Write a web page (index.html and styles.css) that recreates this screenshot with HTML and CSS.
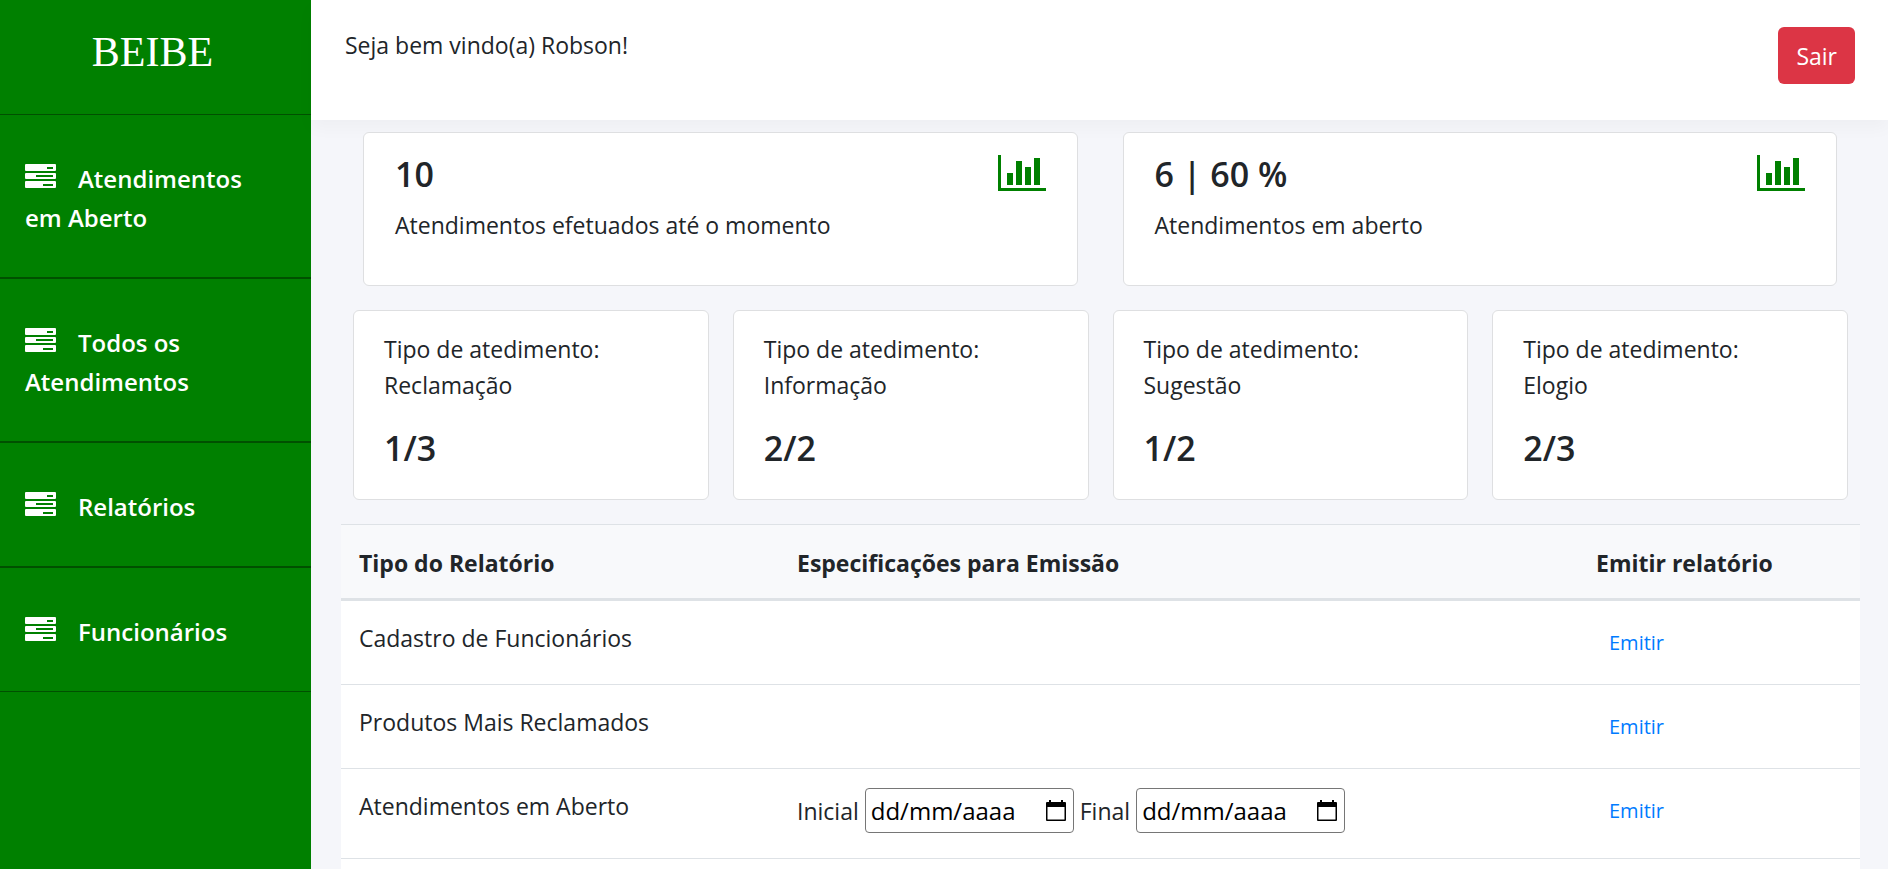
FILE: index.html
```html
<!DOCTYPE html>
<html lang="pt-BR">
<head>
<meta charset="utf-8">
<meta name="viewport" content="width=device-width, initial-scale=1">
<title>BEIBE</title>
<link rel="stylesheet" href="styles.css">
</head>
<body>
<svg class="sprite" aria-hidden="true">
  <symbol id="server" viewBox="0 0 31 24">
    <path fill-rule="evenodd" d="M1 0h29q1 0 1 1v5q0 1-1 1H1q-1 0-1-1V1q0-1 1-1zM22 3v2h6V3zM1 9h29q1 0 1 1v4q0 1-1 1H1q-1 0-1-1v-4q0-1 1-1zM11 11v2h17v-2zM1 17h29q1 0 1 1v5q0 1-1 1H1q-1 0-1-1v-5q0-1 1-1zM18 20v2h10v-2z"/>
  </symbol>
  <symbol id="chart" viewBox="0 0 48 36">
    <path d="M0 0h3v33h45v3H0zM9 18h6v12H9zM18 6h6v24h-6zM27 12h6v18h-6zM36 3h6v27h-6z"/>
  </symbol>
  <symbol id="calendar" viewBox="0 0 20 21">
    <path fill-rule="evenodd" d="M3 0h2v2h10V0h2v2h2q1 0 1 1v17q0 1-1 1H1q-1 0-1-1V3q0-1 1-1h2zM1.500 7v12.500h17V7z"/>
  </symbol>
</svg>
<div class="app">
  <aside class="sidebar">
    <div class="brand">BEIBE</div>
    <nav class="menu">
      <a class="menu-item" href="#abertos"><svg class="menu-icon"><use href="#server"/></svg>Atendimentos em Aberto</a>
      <a class="menu-item" href="#todos"><svg class="menu-icon"><use href="#server"/></svg>Todos os Atendimentos</a>
      <a class="menu-item" href="#relatorios"><svg class="menu-icon"><use href="#server"/></svg>Relatórios</a>
      <a class="menu-item" href="#funcionarios"><svg class="menu-icon"><use href="#server"/></svg>Funcionários</a>
    </nav>
  </aside>
  <div class="page">
    <header class="topbar">
      <span>Seja bem vindo(a) Robson!</span>
      <button class="logout" type="button">Sair</button>
    </header>
    <main class="content">
      <section class="totals">
        <article class="card total">
          <div><h2 class="figure">10</h2><p class="caption">Atendimentos efetuados até o momento</p></div>
          <svg class="chart-icon"><use href="#chart"/></svg>
        </article>
        <article class="card total">
          <div><h2 class="figure">6 | 60 %</h2><p class="caption">Atendimentos em aberto</p></div>
          <svg class="chart-icon"><use href="#chart"/></svg>
        </article>
      </section>
      <section class="types">
        <article class="card type"><p class="caption">Tipo de atedimento:<br>Reclamação</p><h2 class="figure">1/3</h2></article>
        <article class="card type"><p class="caption">Tipo de atedimento:<br>Informação</p><h2 class="figure">2/2</h2></article>
        <article class="card type"><p class="caption">Tipo de atedimento:<br>Sugestão</p><h2 class="figure">1/2</h2></article>
        <article class="card type"><p class="caption">Tipo de atedimento:<br>Elogio</p><h2 class="figure">2/3</h2></article>
      </section>
      <table class="reports">
        <colgroup><col class="col-type"><col class="col-spec"><col class="col-action"></colgroup>
        <thead>
          <tr><th>Tipo do Relatório</th><th>Especificações para Emissão</th><th>Emitir relatório</th></tr>
        </thead>
        <tbody>
          <tr><td>Cadastro de Funcionários</td><td></td><td><a class="emit" href="#emitir-cadastro">Emitir</a></td></tr>
          <tr><td>Produtos Mais Reclamados</td><td></td><td><a class="emit" href="#emitir-produtos">Emitir</a></td></tr>
          <tr>
            <td>Atendimentos em Aberto</td>
            <td>
              <div class="period">
                <label for="inicial">Inicial</label>
                <span class="date"><input class="date-input" id="inicial" type="text" placeholder="dd/mm/aaaa"><button class="date-button" type="button" aria-label="Abrir calendário inicial"><svg class="date-icon"><use href="#calendar"/></svg></button></span>
                <label for="final">Final</label>
                <span class="date"><input class="date-input" id="final" type="text" placeholder="dd/mm/aaaa"><button class="date-button" type="button" aria-label="Abrir calendário final"><svg class="date-icon"><use href="#calendar"/></svg></button></span>
              </div>
            </td>
            <td><a class="emit" href="#emitir-abertos">Emitir</a></td>
          </tr>
          <tr><td></td><td></td><td></td></tr>
        </tbody>
      </table>
    </main>
  </div>
</div>
</body>
</html>
```
FILE: styles.css
```css
* { box-sizing: border-box; }

body {
  margin: 0;
  font-family: "Open Sans", "Noto Sans", sans-serif;
  font-size: 23px;
  line-height: 36px;
  color: #212529;
  background: #f5f6fa;
}

h2, p { margin: 0; }
button, input { font: inherit; }
.sprite { display: none; }

.app {
  display: flex;
  height: 100vh;
  overflow: hidden;
}

.sidebar {
  flex: 0 0 311px;
  background: #008000;
  color: #fff;
}

.brand {
  height: 114px;
  padding: 32px 6px 0 0;
  font-family: "Liberation Serif", serif;
  font-size: 42px;
  line-height: 40px;
  text-align: center;
}

.menu-item {
  display: block;
  padding: 44px 50px 40px 25px;
  border: solid #005000;
  border-width: 1px 0;
  font-size: 24px;
  font-weight: 600;
  line-height: 39px;
  color: #fff;
  text-decoration: none;
}

.menu-icon {
  width: 31px;
  height: 24px;
  margin-right: 22px;
  fill: #fff;
}

.page {
  flex: 1;
  min-width: 0;
}

.topbar {
  display: flex;
  justify-content: space-between;
  align-items: flex-start;
  height: 120px;
  padding: 27px 33px 0 34px;
  background: #fff;
  box-shadow: 0 8px 16px rgba(0, 0, 0, 0.03);
}

.logout {
  padding: 11px 18px 10px;
  border: 0;
  border-radius: 6px;
  background: #dc3545;
  color: #fff;
}

.content { padding: 12px 28px 0 30px; }

.card {
  background: #fff;
  border: 1px solid #dedfe1;
  border-radius: 6px;
}

.totals {
  display: grid;
  grid-template-columns: 1fr 1fr;
  gap: 45px;
  padding: 0 23px 0 22px;
}

.total {
  display: flex;
  justify-content: space-between;
  align-items: flex-start;
  min-height: 154px;
  padding: 20px 31px;
}

.figure {
  font-size: 34px;
  font-weight: 600;
  line-height: 43px;
}

.total .caption { margin-top: 11px; }

.chart-icon {
  width: 48px;
  height: 36px;
  margin-top: 2px;
  fill: #008000;
}

.types {
  display: grid;
  grid-template-columns: repeat(4, 1fr);
  gap: 24px;
  padding: 24px 12px;
}

.type {
  min-height: 190px;
  padding: 20px 30px;
}

.type .figure { margin-top: 24px; }

.reports {
  width: 100%;
  table-layout: fixed;
  border-collapse: collapse;
  background: #fff;
}

.col-type { width: 438px; }
.col-action { width: 282px; }

.reports th, .reports td {
  border-top: 1px solid #dee2e6;
  text-align: left;
  vertical-align: top;
}

.reports th {
  padding: 20px 18px 17px;
  background: #f8f9fb;
  border-bottom: 3px solid #dee2e6;
  font-weight: 700;
}

.reports td {
  height: 84px;
  padding: 19px 18px 18px;
}

.emit {
  display: inline-block;
  padding: 7px 13px;
  font-size: 20px;
  line-height: 32px;
  color: #007bff;
  text-decoration: none;
}

.period {
  display: flex;
  align-items: center;
  gap: 6px;
  padding-bottom: 7px;
}

.date {
  display: flex;
  align-items: center;
  width: 209px;
  height: 45px;
  padding: 0 7px 0 5px;
  border: 1px solid #767676;
  border-radius: 4px;
  background: #fff;
}

.date-input {
  flex: 1;
  min-width: 0;
  padding: 0;
  border: 0;
  outline: 0;
  background: none;
  font-size: 24px;
}

.date-input::placeholder { color: #000; opacity: 1; }

.date-button {
  display: flex;
  padding: 0;
  border: 0;
  background: none;
}

.date-icon { width: 20px; height: 21px; }
```
